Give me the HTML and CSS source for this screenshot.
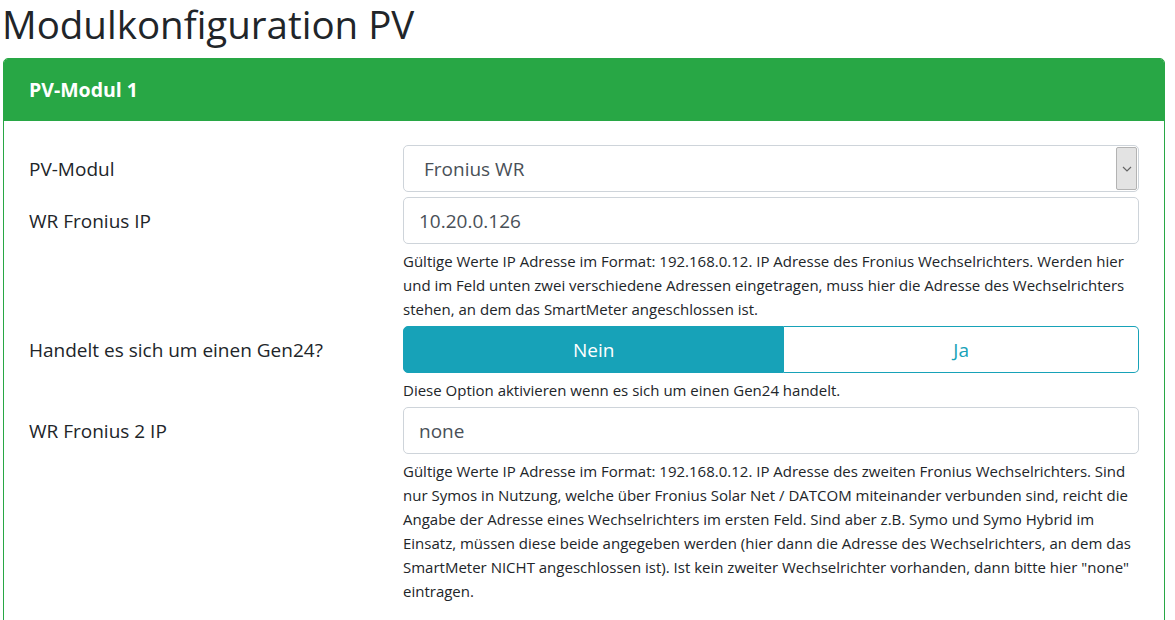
FILE: index.html
```html
<!DOCTYPE html>
<html lang="de">
<head>
<meta charset="utf-8">
<title>Modulkonfiguration PV</title>
<link rel="stylesheet" href="styles.css">
</head>
<body>
<div class="page">
  <h1 class="title">Modulkonfiguration PV</h1>
  <div class="card">
    <div class="card-header">PV-Modul 1</div>
    <div class="card-body">
      <div class="form-row">
        <label class="label">PV-Modul</label>
        <div class="field">
          <div class="select">
            <span class="select-text">Fronius WR</span>
            <span class="select-arrow">
              <svg width="10" height="6" viewBox="0 0 10 6"><path d="M1 1 L5 5 L9 1" fill="none" stroke="#666" stroke-width="1.2"/></svg>
            </span>
          </div>
        </div>
      </div>
      <div class="form-row">
        <label class="label">WR Fronius IP</label>
        <div class="field">
          <div class="input">10.20.0.126</div>
          <small class="help">Gültige Werte IP Adresse im Format: 192.168.0.12. IP Adresse des Fronius Wechselrichters. Werden hier und im Feld unten zwei verschiedene Adressen eingetragen, muss hier die Adresse des Wechselrichters stehen, an dem das SmartMeter angeschlossen ist.</small>
        </div>
      </div>
      <div class="form-row">
        <label class="label">Handelt es sich um einen Gen24?</label>
        <div class="field">
          <div class="btn-group">
            <span class="btn btn-active">Nein</span>
            <span class="btn">Ja</span>
          </div>
          <small class="help">Diese Option aktivieren wenn es sich um einen Gen24 handelt.</small>
        </div>
      </div>
      <div class="form-row">
        <label class="label">WR Fronius 2 IP</label>
        <div class="field">
          <div class="input">none</div>
          <small class="help">Gültige Werte IP Adresse im Format: 192.168.0.12. IP Adresse des zweiten Fronius Wechselrichters. Sind nur Symos in Nutzung, welche über Fronius Solar Net / DATCOM miteinander verbunden sind, reicht die Angabe der Adresse eines Wechselrichters im ersten Feld. Sind aber z.B. Symo und Symo Hybrid im Einsatz, müssen diese beide angegeben werden (hier dann die Adresse des Wechselrichters, an dem das SmartMeter NICHT angeschlossen ist). Ist kein zweiter Wechselrichter vorhanden, dann bitte hier "none" eintragen.</small>
        </div>
      </div>
    </div>
  </div>
</div>
</body>
</html>
```

FILE: styles.css
```css
html, body {
  margin: 0;
  padding: 0;
  background: #fff;
}
body {
  font-family: "Open Sans", "Noto Sans", sans-serif;
  font-size: 19px;
  line-height: 1.5;
  color: #212529;
}
.page {
  padding-left: 3px;
  width: 1162px;
}
.title {
  margin: 0 0 10px -1px;
  font-size: 38.5px;
  font-weight: 400;
  line-height: 48px;
  color: #212529;
}
.card {
  border: 1px solid #28a745;
  border-radius: 5px;
  background: #fff;
}
.card-header {
  background: #28a745;
  color: #fff;
  font-weight: 700;
  font-size: 19.5px;
  line-height: 30px;
  padding: 16px 25px;
  border-radius: 4px 4px 0 0;
}
.card-body {
  padding: 24px 25px 25px;
}
.form-row {
  display: flex;
  margin-bottom: 5px;
}
.label {
  width: 374px;
  flex: none;
  padding-top: 9px;
  line-height: 30px;
}
.field {
  flex: 1;
  min-width: 0;
}
.input, .select {
  box-sizing: border-box;
  height: 47px;
  border: 1px solid #ced4da;
  border-radius: 5px;
  color: #495057;
  line-height: 30px;
  padding: 7.5px 15px;
}
.select {
  display: flex;
  align-items: stretch;
  padding: 0 1px 0 20px;
}
.select-text {
  flex: 1;
  align-self: center;
}
.select-arrow {
  width: 19px;
  margin: 1px 0;
  border: 1px solid #b3b3b3;
  border-radius: 2px;
  background: #e3e3e3;
  display: flex;
  align-items: center;
  justify-content: center;
}
.help {
  display: block;
  margin-top: 5px;
  font-size: 15px;
  line-height: 24px;
  color: #212529;
}
.btn-group {
  display: flex;
  height: 47px;
}
.btn {
  flex: 1 1 auto;
  box-sizing: border-box;
  border: 1px solid #17a2b8;
  color: #17a2b8;
  text-align: center;
  line-height: 30px;
  padding: 7.5px 15px;
  background: #fff;
}
.btn:first-child {
  border-radius: 5px 0 0 5px;
}
.btn:last-child {
  border-radius: 0 5px 5px 0;
  border-left: none;
}
.btn-active {
  background: #17a2b8;
  color: #fff;
}
```
